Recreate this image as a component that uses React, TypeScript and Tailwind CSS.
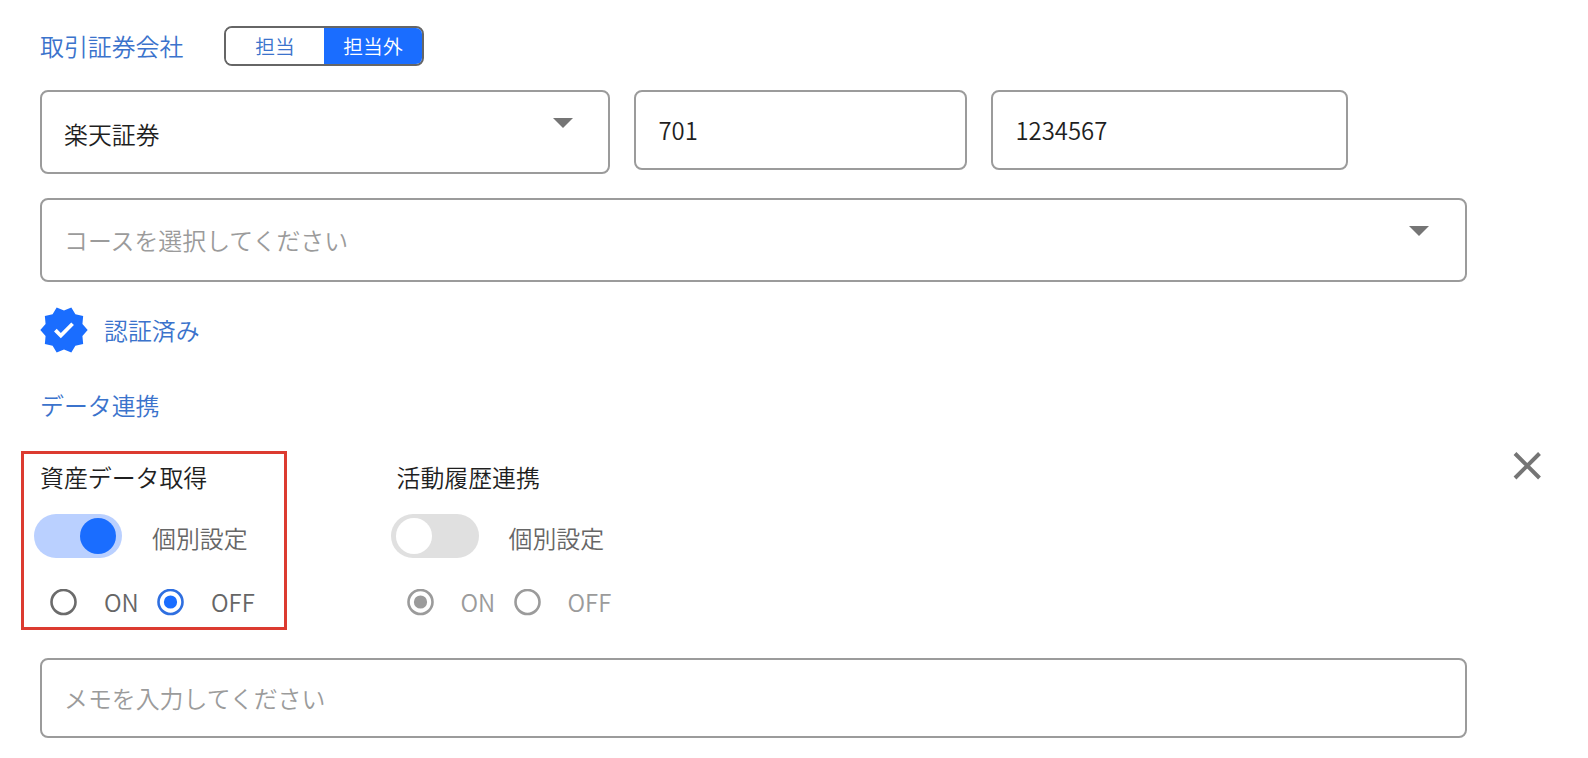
import React from "react";

const boxBorder = "rounded-lg border-2 border-[#9b9b9b] bg-white";

function Caret() {
  return (
    <svg width="20" height="10" viewBox="0 0 20 10" className="block shrink-0" aria-hidden="true">
      <path d="M0 0h20L10 10z" fill="#757575" />
    </svg>
  );
}

function VerifiedBadge() {
  return (
    <svg width="48" height="48" viewBox="0.85 0.85 22.3 22.3" className="block shrink-0" aria-hidden="true">
      <path
        d="M23 12l-2.44-2.79.34-3.69-3.61-.82-1.89-3.2L12 2.96 8.6 1.5 6.71 4.69 3.1 5.5l.34 3.7L1 12l2.44 2.79-.34 3.7 3.61.82L8.6 22.5l3.4-1.47 3.4 1.46 1.89-3.19 3.61-.82-.34-3.69z"
        fill="#1a6dff"
      />
      <path
        d="M10.09 16.72l-3.8-3.81 1.48-1.48 2.32 2.33 5.85-5.87 1.48 1.48z"
        fill="#fff"
        transform="translate(2.15 1.95) scale(.83)"
      />
    </svg>
  );
}

function Switch({ on }: { on: boolean }) {
  return (
    <div
      className={
        on
          ? "flex h-11 w-[88px] items-center justify-end rounded-full bg-[#bad0ff] pr-1.5 pl-[5px]"
          : "flex h-11 w-[88px] items-center justify-start rounded-full bg-[#e0e0e0] pr-[5px] pl-[5px]"
      }
    >
      <div className={on ? "size-9 rounded-full bg-[#1a6dff]" : "size-9 rounded-full bg-white"} />
    </div>
  );
}

function Radio({ checked, ring, dot }: { checked: boolean; ring: string; dot: string }) {
  return (
    <svg width="27" height="27" viewBox="0 0 27 27" className="block shrink-0" aria-hidden="true">
      <circle cx="13.5" cy="13" r="12" fill="#fff" stroke={ring} strokeWidth="2.6" />
      {checked && <circle cx="13.5" cy="13" r="6.6" fill={dot} />}
    </svg>
  );
}

function LinkSetting({ title, on, value }: { title: string; on: boolean; value: "ON" | "OFF" }) {
  const idle = on ? "#6b6b6b" : "#9b9b9b";
  const active = on ? "#2f6fe0" : "#9b9b9b";
  const dot = on ? "#1a6dff" : "#9b9b9b";
  return (
    <section className="w-[356.5px]">
      <h3 className="h-9 text-[#1f1f1f]">{title}</h3>
      <div className="-ml-1.5 mt-[19px] flex h-11 items-center">
        <Switch on={on} />
        <span className="ml-[30px] pt-1 text-[#666666]">個別設定</span>
      </div>
      <div className={on ? "mt-[26px] flex h-9 items-center pl-2.5 text-[#666666]" : "mt-[26px] flex h-9 items-center pl-2.5 text-[#9b9b9b]"}>
        <Radio checked={value === "ON"} ring={value === "ON" ? active : idle} dot={dot} />
        <span className="ml-[27px] w-[53px]">ON</span>
        <Radio checked={value === "OFF"} ring={value === "OFF" ? active : idle} dot={dot} />
        <span className="ml-[27px]">OFF</span>
      </div>
    </section>
  );
}

export default function App() {
  return (
    <main
      lang="ja"
      className="relative h-[758px] w-[1588px] overflow-hidden bg-white pl-10 pt-[26px] font-['Noto_Sans_CJK_JP',sans-serif] text-[23.9px] font-[350] leading-9"
    >
      <header className="flex h-10 items-center">
        <h2 className="w-[184px] text-[#3b73cc]">取引証券会社</h2>
        <div className="flex h-10 w-[200px] overflow-hidden rounded-lg border-2 border-[#666666] text-[19.8px] leading-9">
          <button className="w-[98px] bg-white text-center text-[#3b73cc]">担当</button>
          <button className="w-[98px] bg-[#1a6dff] text-center text-white">担当外</button>
        </div>
      </header>

      <div className="mt-6 flex items-start gap-6">
        <div className={`${boxBorder} flex h-[84px] w-[570px] justify-between pl-[22px] pr-[35.5px]`}>
          <span className="pt-6 text-[#1f1f1f]">楽天証券</span>
          <span className="pt-[26px]"><Caret /></span>
        </div>
        <div className={`${boxBorder} flex h-20 w-[333px] items-center pl-[22.5px] text-[#1f1f1f]`}>701</div>
        <div className={`${boxBorder} flex h-20 w-[357px] items-center pl-[22.5px] text-[#1f1f1f]`}>1234567</div>
      </div>

      <div className={`${boxBorder} mt-6 flex h-[84px] w-[1427px] justify-between pl-[22px] pr-[36px]`}>
        <span className="pt-[22px] text-[#9b9b9b]">コースを選択してください</span>
        <span className="pt-[26px]"><Caret /></span>
      </div>

      <div className="mt-6 flex h-12 items-center gap-4 text-[#3b73cc]">
        <VerifiedBadge />
        <span>認証済み</span>
      </div>

      <h2 className="mt-[33px] h-9 text-[#3b73cc]">データ連携</h2>

      <div className="mt-9 flex h-[161px] items-start">
        <LinkSetting title="資産データ取得" on value="OFF" />
        <LinkSetting title="活動履歴連携" on={false} value="ON" />
        <button aria-label="閉じる" className="-mt-2 ml-auto mr-[46px] block">
          <svg width="29" height="29" viewBox="0 0 29 29" className="block">
            <path d="M2 2.5l24.5 24.5M26.500 2.500L2 27" fill="none" stroke="#757575" strokeWidth="4" />
          </svg>
        </button>
      </div>

      <div className={`${boxBorder} mt-[38px] flex h-20 w-[1427px] items-center pl-[22px] text-[#9b9b9b]`}>
        メモを入力してください
      </div>

      <div className="pointer-events-none absolute left-[21px] top-[451px] h-[179px] w-[266px] border-3 border-[#dc3b30]" />
    </main>
  );
}
